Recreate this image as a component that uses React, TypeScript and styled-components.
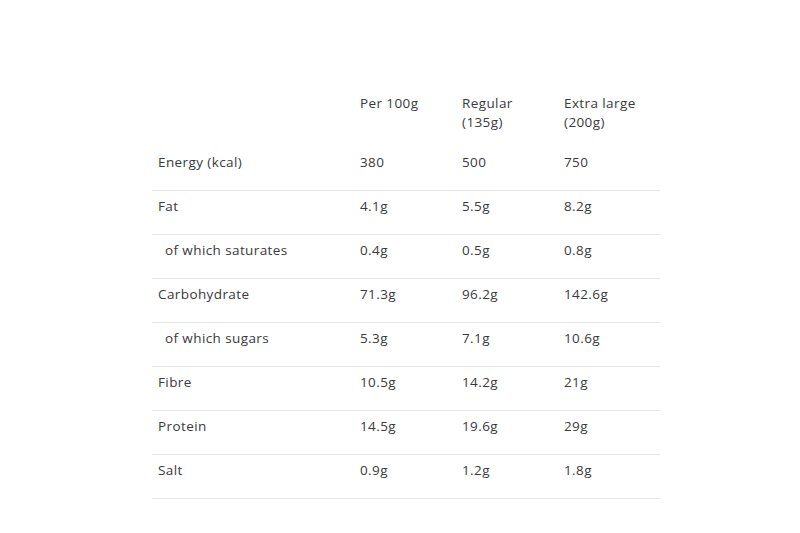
import React from "react";
import styled, { createGlobalStyle } from "styled-components";

const Global = createGlobalStyle`
  html, body { margin: 0; padding: 0; background: #ffffff; }
  body { font-family: "Open Sans", "Noto Sans", Arial, sans-serif; color: #3a3a3a; }
`;

const Page = styled.div`
  width: 800px;
  height: 533px;
  display: flex;
  justify-content: center;
  padding-top: 88px;
  box-sizing: border-box;
  padding-left: 12px;
`;

const Table = styled.div`
  width: 508px;
  display: grid;
  grid-template-columns: 202px 102px 102px 102px;
  align-content: start;
`;

const Row = styled.div`
  display: contents;
`;

const Cell = styled.div<{ $header?: boolean; $indent?: boolean; $bordered?: boolean }>`
  font-size: 13.5px;
  letter-spacing: 0.4px;
  line-height: 19px;
  padding: ${(p) => (p.$header ? "6px 6px 15px 6px" : "6px 6px 18px 6px")};
  padding-left: ${(p) => (p.$indent ? "13px" : "6px")};
  border-bottom: ${(p) => (p.$bordered ? "1px solid #e6e6e6" : "none")};
  white-space: pre-line;
`;

const rows: { label: string; indent?: boolean; values: string[] }[] = [
  { label: "Energy (kcal)", values: ["380", "500", "750"] },
  { label: "Fat", values: ["4.1g", "5.5g", "8.2g"] },
  { label: "of which saturates", indent: true, values: ["0.4g", "0.5g", "0.8g"] },
  { label: "Carbohydrate", values: ["71.3g", "96.2g", "142.6g"] },
  { label: "of which sugars", indent: true, values: ["5.3g", "7.1g", "10.6g"] },
  { label: "Fibre", values: ["10.5g", "14.2g", "21g"] },
  { label: "Protein", values: ["14.5g", "19.6g", "29g"] },
  { label: "Salt", values: ["0.9g", "1.2g", "1.8g"] },
];

export default function App() {
  return (
    <>
      <Global />
      <Page>
        <Table>
          <Row>
            <Cell $header />
            <Cell $header>Per 100g</Cell>
            <Cell $header>{"Regular\n(135g)"}</Cell>
            <Cell $header>{"Extra large\n(200g)"}</Cell>
          </Row>
          {rows.map((r) => (
            <Row key={r.label}>
              <Cell $indent={r.indent} $bordered>{r.label}</Cell>
              {r.values.map((v, i) => (
                <Cell key={i} $bordered>{v}</Cell>
              ))}
            </Row>
          ))}
        </Table>
      </Page>
    </>
  );
}
